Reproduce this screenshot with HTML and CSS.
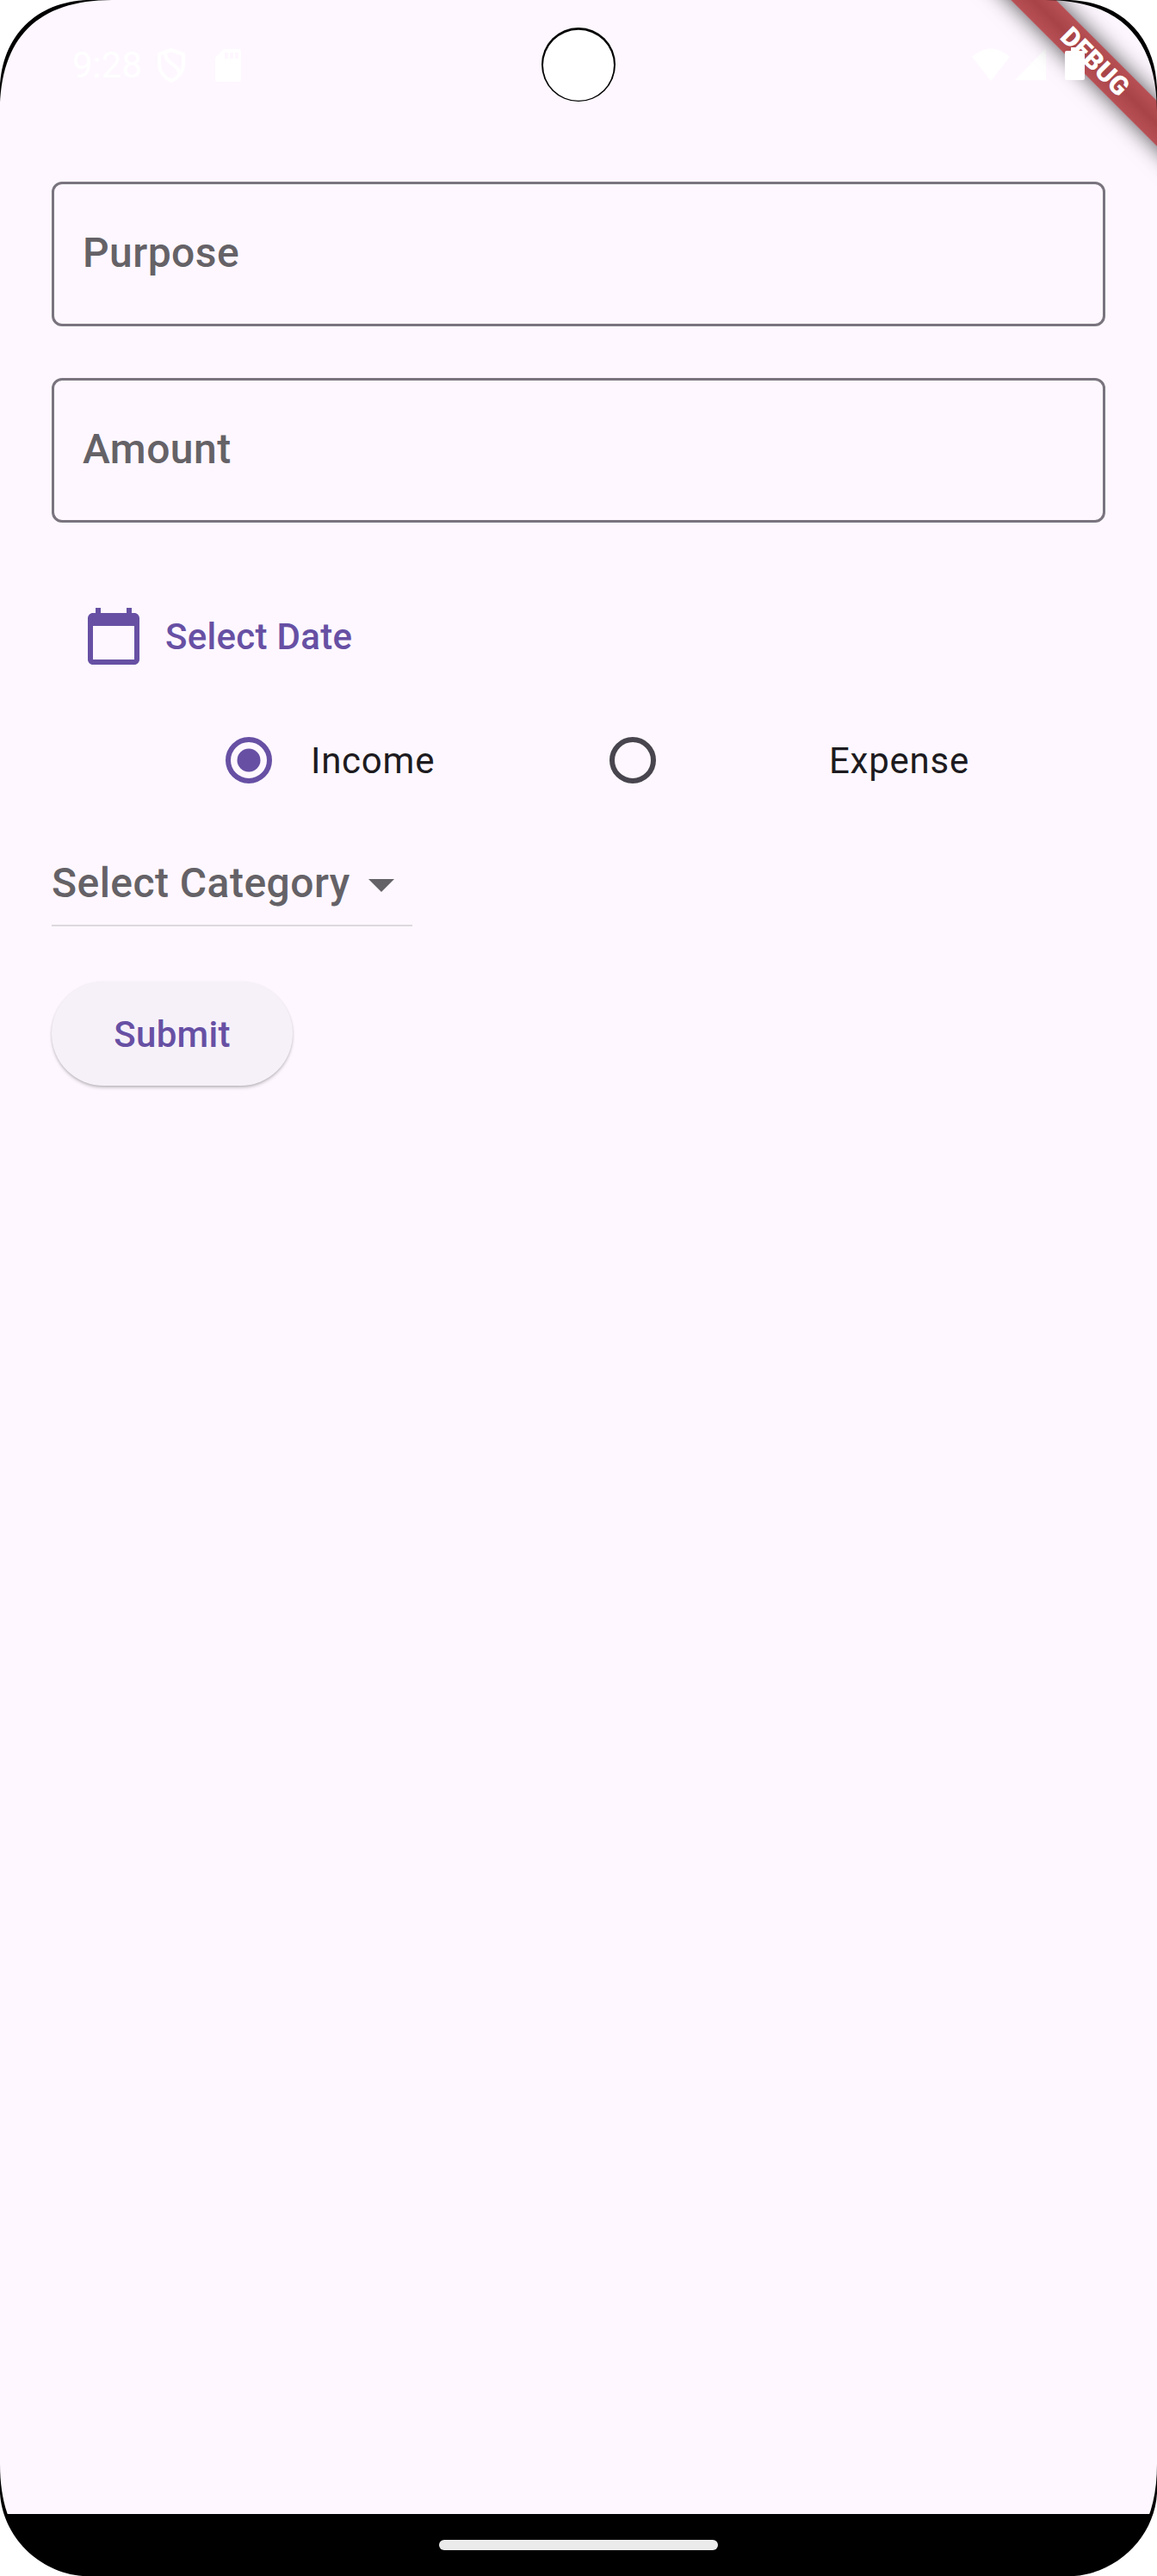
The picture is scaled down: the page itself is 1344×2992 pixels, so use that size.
FILE: index.html
```
<!DOCTYPE html>
<html lang="en">
<head>
<meta charset="utf-8">
<title>Add transaction</title>
<link rel="stylesheet" href="styles.css">
</head>
<body>
<div class="device">
  <header class="status-bar">
    <div class="status-left">
      <span class="clock">9:28</span>
      <svg class="shield" viewBox="0 0 34 42"><path d="M17 3 L31 8 V19 C31 28 25 35 17 39 C9 35 3 28 3 19 V8 Z" fill="none" stroke="#fff" stroke-width="4" stroke-linejoin="round"/><path d="M10 5 C9 21 27 18 26 32" fill="none" stroke="#fff" stroke-width="4"/></svg>
      <svg class="sd" viewBox="0 0 30 38"><path fill="#fff" fill-rule="evenodd" d="M10 0H27Q30 0 30 3V35Q30 38 27 38H3Q0 38 0 35V10ZM11 4V11H15V4ZM17 4V11H21V4ZM23 4V11H27V4Z"/></svg>
    </div>
    <div class="status-right">
      <svg class="wifi" viewBox="0 0 44 38"><path fill="#fff" d="M0 10Q22-9 44 10L22 38Z"/></svg>
      <svg class="signal" viewBox="0 0 36 37"><path fill="#fff" d="M0 37H36V0Z"/></svg>
    </div>
  </header>

  <main class="form">
    <div class="field">Purpose</div>
    <div class="field">Amount</div>
    <div class="date-button">
      <svg class="calendar" viewBox="0 0 24 24"><path fill="currentColor" d="M20 3h-1V1h-2v2H7V1H5v2H4c-1.1 0-2 .9-2 2v16c0 1.1.9 2 2 2h16c1.1 0 2-.9 2-2V5c0-1.1-.9-2-2-2zm0 18H4V8h16v13z"/></svg>
      <span>Select Date</span>
    </div>
    <div class="radios">
      <svg class="radio radio-on" viewBox="0 0 54 54"><circle cx="27" cy="27" r="24" fill="none" stroke="currentColor" stroke-width="6"/><circle cx="27" cy="27" r="13.5" fill="currentColor"/></svg>
      <span class="income">Income</span>
      <svg class="radio" viewBox="0 0 54 54"><circle cx="27" cy="27" r="24" fill="none" stroke="currentColor" stroke-width="6"/></svg>
      <span class="expense">Expense</span>
    </div>
    <div class="dropdown">
      <span>Select Category</span>
      <svg class="arrow" viewBox="7 10 10 5"><path fill="currentColor" d="M7 10l5 5 5-5z"/></svg>
    </div>
    <button class="submit">Submit</button>
  </main>

  <footer class="nav-bar"><div class="handle"></div></footer>

  <div class="debug"><span>DEBUG</span></div>
  <svg class="overlay" viewBox="0 0 1344 2992">
    <path d="M0 0H130C44 0 0 44 0 130Z"/>
    <path d="M1344 0H1214C1300 0 1344 44 1344 130Z"/>
    <path d="M0 2862C0 2948 44 2992 130 2992H0Z"/>
    <path d="M1344 2862C1344 2948 1300 2992 1214 2992H1344Z"/>
    <path class="outside" d="M0 0H102C42 2 2 42 0 102Z"/>
    <path class="outside" d="M1344 0H1242C1302 2 1342 42 1344 102Z"/>
    <path class="outside" d="M0 2992H96C45 2988 3 2946 0 2896Z"/>
    <path class="outside" d="M1344 2992H1248C1299 2988 1341 2946 1344 2896Z"/>
    <circle cx="672" cy="75" r="43"/>
    <circle class="outside" cx="672" cy="75.8" r="41"/>
  </svg>
  <svg class="battery" viewBox="0 0 23 38"><path fill="#fff" d="M7 0H16V4H21Q23 4 23 6V36Q23 38 21 38H2Q0 38 0 36V6Q0 4 2 4H7Z"/></svg>
</div>
</body>
</html>
```
FILE: styles.css
```
* { box-sizing: border-box; }
body { margin: 0; font-family: Roboto, "Liberation Sans", sans-serif; }
.device {
  position: relative;
  width: 1344px;
  height: 2992px;
  display: flex;
  flex-direction: column;
  overflow: hidden;
  background: #fef7ff;
}
svg { display: block; flex: none; }

.status-bar {
  height: 151px;
  padding: 0 129px 0 84px;
  display: flex;
  justify-content: space-between;
  align-items: center;
  color: #fff;
}
.status-left, .status-right { display: flex; align-items: center; }
.status-right { margin-top: -2px; }
.clock { font-size: 42px; line-height: 50px; width: 98px; }
.shield { width: 34px; height: 42px; }
.sd { width: 30px; height: 38px; margin-left: 34px; }
.wifi { width: 44px; height: 38px; margin-right: 6px; }
.signal { width: 36px; height: 37px; }

.form {
  flex: 1;
  padding: 60px;
  display: flex;
  flex-direction: column;
  align-items: flex-start;
}
.field {
  width: 100%;
  height: 168px;
  margin-bottom: 60px;
  padding: 43px 33px;
  border: 3px solid #79747e;
  border-radius: 12px;
  font-size: 48px;
  line-height: 73px;
  font-weight: 500;
  letter-spacing: 0.45px;
  color: #656267;
}
.date-button {
  margin: 36px 0 0 36px;
  height: 72px;
  display: flex;
  gap: 24px;
  color: #6750a4;
  font-size: 42px;
  line-height: 73px;
  font-weight: 500;
  letter-spacing: 0.3px;
}
.calendar { width: 72px; height: 72px; }
.radios {
  height: 144px;
  margin-top: 36px;
  padding-left: 202px;
  display: flex;
  align-items: center;
  font-size: 42px;
  line-height: 61px;
  letter-spacing: 0.75px;
  color: #1d1b20;
}
.radio { width: 54px; height: 54px; color: #49454f; }
.radio-on { color: #6750a4; }
.income { width: 392px; padding: 1px 0 0 45px; }
.expense { padding: 1px 0 0 201px; }
.dropdown {
  width: 419px;
  height: 101px;
  margin-top: 20px;
  padding-top: 2px;
  display: flex;
  align-items: center;
  border-bottom: 2px solid #dcd9dd;
  color: #656267;
  font-size: 48px;
  line-height: 73px;
  font-weight: 500;
  letter-spacing: 0.45px;
}
.dropdown span { width: 368px; white-space: nowrap; }
.arrow { width: 30px; height: 15px; margin-top: 6px; }
.submit {
  margin-top: 64px;
  width: 280px;
  height: 121px;
  padding: 2px 0 0;
  border: 0;
  border-radius: 61px;
  background: #f6f1f9;
  box-shadow: 0 3px 4px -1px rgba(0,0,0,.22), 0 1px 3px rgba(0,0,0,.12);
  font-family: inherit;
  font-size: 42px;
  line-height: 61px;
  font-weight: 500;
  letter-spacing: 0.3px;
  color: #6750a4;
}
.nav-bar {
  height: 72px;
  background: #000;
  display: flex;
  align-items: center;
  justify-content: center;
}
.handle { width: 324px; height: 12px; border-radius: 6px; background: #ebebeb; }

/* Corner ribbon, rotated about its own centre */
.debug {
  position: absolute;
  left: 1072px;
  top: 53px;
  width: 400px;
  height: 37px;
  transform: rotate(45deg);
  display: flex;
  align-items: center;
  justify-content: center;
  background: linear-gradient(#b75055, #a84448 50%, #b75055);
  box-shadow: 0 0 24px 2px rgba(0,0,0,.6);
  color: #fff;
  font-size: 30.6px;
  line-height: 36px;
  font-weight: 900;
}

/* Display cutout and rounded screen edges */
.overlay { position: absolute; inset: 0; width: 1344px; height: 2992px; fill: #000; }
.outside { fill: #fff; }

/* The battery sits above the ribbon */
.battery { position: absolute; left: 1237px; top: 55px; width: 23px; height: 38px; }
```
